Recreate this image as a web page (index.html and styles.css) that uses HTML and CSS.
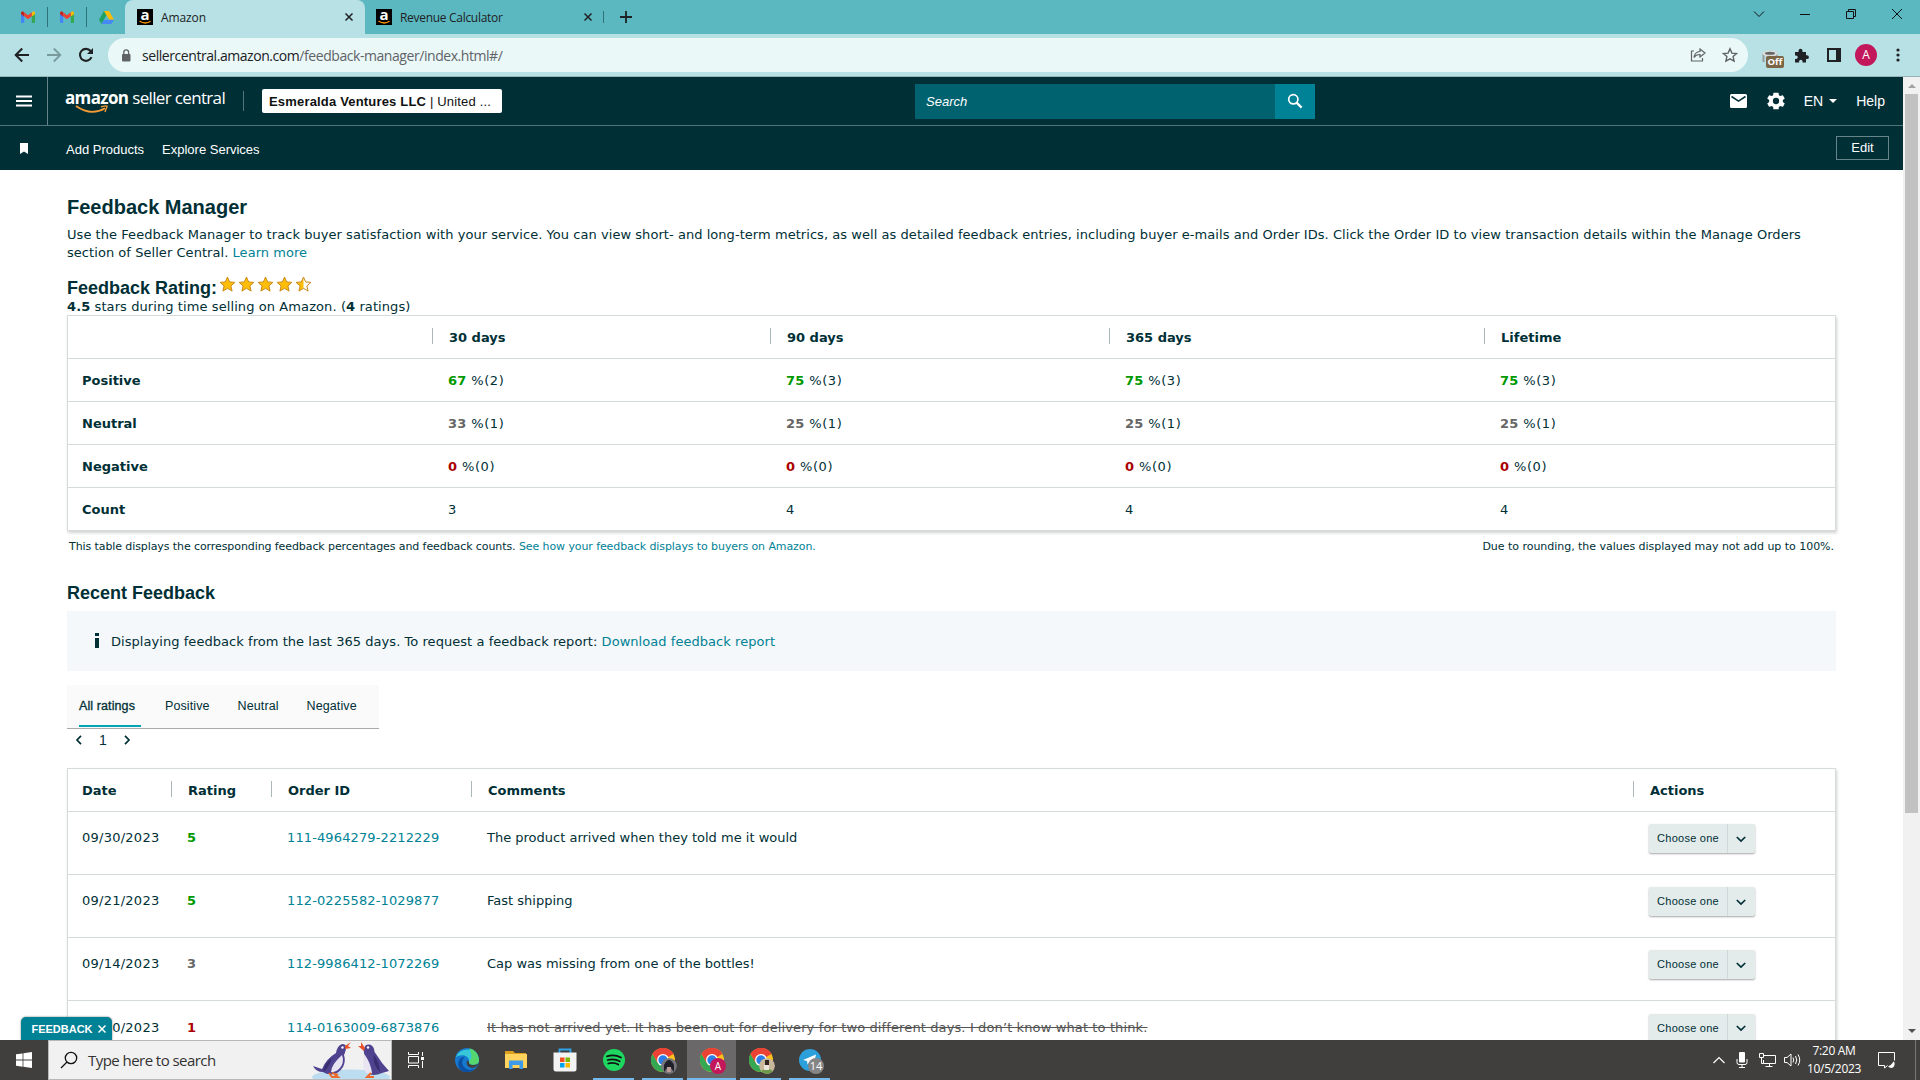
FILE: index.html
```html
<!DOCTYPE html>
<html lang="en">
<head>
  <meta charset="UTF-8">
  <meta name="viewport" content="width=device-width, initial-scale=1.0">
  <title>Feedback Manager - Amazon</title>
  <link rel="stylesheet" href="styles.css">
</head>
<body>

  <!-- shared icons -->
  <svg class="defs" width="0" height="0">
    <symbol id="gmail" viewBox="0 0 14 12">
      <path d="M0 2v9q0 1 1 1h2.200V4.500z" fill="#4285f4"/>
      <path d="M14 2v9q0 1-1 1h-2.200V4.500z" fill="#34a853"/>
      <path d="M10.800 1.500v4L14 3.200V2Q13.500-.5 11.600.700z" fill="#fbbc04"/>
      <path d="M3.200 1.500v4L0 3.200V2Q.5-.5 2.400.700z" fill="#c5221f"/>
      <path d="M3.200 1.300L7 4.300l3.800-3v4L7 8.300l-3.800-3z" fill="#ea4335"/>
    </symbol>
    <symbol id="amazon" viewBox="0 0 16 16">
      <rect width="16" height="16" fill="#000"/>
      <text x="8" y="11" text-anchor="middle" font-size="15" font-weight="bold" font-family="Open Sans, sans-serif" fill="#fff">a</text>
      <path d="M2.500 12q5.500 3.800 11 .3" fill="none" stroke="#f90" stroke-width="1.300"/>
    </symbol>
    <symbol id="cross" viewBox="0 0 10 10">
      <path d="M1.500 1.500l7 7M8.500 1.500l-7 7" fill="none" stroke="currentColor" stroke-width="1.500"/>
    </symbol>
    <symbol id="down" viewBox="0 0 12 12">
      <path d="M1.800 4L6 8l4.200-4" fill="none" stroke="currentColor" stroke-width="1.700"/>
    </symbol>
    <symbol id="star" viewBox="0 0 17 16">
      <path d="M8.500 1l2.100 4.900 5.300.5-4 3.500 1.200 5.200-4.600-2.800-4.600 2.800 1.200-5.200-4-3.500 5.300-.5z" fill="#ffbe0a" stroke="#c98a1a" stroke-width="1"/>
    </symbol>
    <symbol id="star-half" viewBox="0 0 17 16">
      <path d="M8.500 1l2.100 4.900 5.300.5-4 3.500 1.200 5.200-4.600-2.800-4.600 2.800 1.200-5.200-4-3.500 5.300-.5z" fill="#fff"/>
      <path d="M8.500 1v11.300l-4.600 2.800 1.200-5.200-4-3.500 5.300-.5z" fill="#ffbe0a"/>
      <path d="M8.500 1l2.100 4.900 5.300.5-4 3.500 1.200 5.200-4.600-2.800-4.600 2.800 1.200-5.200-4-3.500 5.300-.5z" fill="none" stroke="#c98a1a" stroke-width="1"/>
    </symbol>
    <symbol id="chrome" viewBox="0 0 24 24">
      <circle cx="12" cy="12" r="12" fill="#fcc31e"/>
      <path d="M12 12L1.600 6A12 12 0 0 1 22.400 6z" fill="#ea4335"/>
      <path d="M1.600 6A12 12 0 0 0 12 24l5.200-9H6.800z" fill="#34a853"/>
      <path d="M12 6h10.400A12 12 0 0 0 1.600 6L6.800 15z" fill="#ea4335"/>
      <circle cx="12" cy="12" r="6" fill="#fff"/>
      <circle cx="12" cy="12" r="4.700" fill="#2b7de9"/>
    </symbol>
  </svg>

  <div class="tab-strip">
    <div class="pinned"><svg width="14" height="12"><use href="#gmail"/></svg></div>
    <div class="pinned"><svg width="14" height="12"><use href="#gmail"/></svg></div>
    <div class="pinned last">
      <svg width="15" height="13" viewBox="0 0 15 13">
        <path d="M5 0h5L5 8.700 2.500 13 0 8.700z" fill="#1ea362"/>
        <path d="M5 0h5l5 8.700h-5z" fill="#fbbc04"/>
        <path d="M5 8.700h10L12.500 13h-10z" fill="#4688f4"/>
        <path d="M7.500 4.400L10 8.700H5z" fill="#5bb8c1"/>
      </svg>
    </div>
    <div class="tab active">
      <svg width="16" height="16"><use href="#amazon"/></svg>
      <span>Amazon</span>
      <svg class="close" width="10" height="10"><use href="#cross"/></svg>
    </div>
    <div class="tab">
      <svg width="16" height="16"><use href="#amazon"/></svg>
      <span>Revenue Calculator</span>
      <svg class="close" width="10" height="10"><use href="#cross"/></svg>
    </div>
    <svg class="new-tab" width="12" height="12" viewBox="0 0 12 12"><path d="M6 0v12M0 6h12" stroke="#202124" stroke-width="1.800"/></svg>
    <div class="window-buttons">
      <svg width="12" height="12" viewBox="0 0 12 12"><path d="M1 3.500l5 5 5-5" fill="none" stroke="#111"/></svg>
      <svg width="12" height="12" viewBox="0 0 12 12"><path d="M1 6.500h10" stroke="#111"/></svg>
      <svg width="12" height="12" viewBox="0 0 12 12"><path d="M1.500 3.500h7v7h-7zM3.500 3.500v-2h7v7h-2" fill="none" stroke="#111"/></svg>
      <svg width="12" height="12" viewBox="0 0 12 12"><path d="M1 1l10 10M11 1L1 11" stroke="#111"/></svg>
    </div>
  </div>

  <div class="toolbar">
    <svg width="16" height="16" viewBox="0 0 16 16"><path d="M15 8H2M8.200 1.500L1.700 8l6.500 6.500" fill="none" stroke="#202124" stroke-width="2"/></svg>
    <svg width="16" height="16" viewBox="0 0 16 16"><path d="M1 8h13M7.800 1.500L14.300 8l-6.500 6.500" fill="none" stroke="#789a9d" stroke-width="1.800"/></svg>
    <svg width="16" height="16" viewBox="0 0 16 16"><path d="M13.500 10.200A6 6 0 1 1 12.600 4" fill="none" stroke="#202124" stroke-width="2.100"/><path d="M15 1v6H9z" fill="#202124"/></svg>
    <div class="omnibox">
      <svg width="10" height="13" viewBox="0 0 10 13"><rect x="1" y="5" width="8.500" height="7.500" rx="1" fill="#5f6368"/><path d="M2.800 5.500V3.300a2.400 2.400 0 0 1 4.800 0v2.200" fill="none" stroke="#5f6368" stroke-width="1.300"/></svg>
      <span class="url">sellercentral.amazon.com<span class="path">/feedback-manager/index.html#/</span></span>
      <svg width="16" height="14" viewBox="0 0 16 14"><path d="M4 3H1.500v10h11v-3M10 1l5 4-5 4V6.500Q6 6.300 4 9.500 4.500 4 10 3.500z" fill="none" stroke="#5f6368" stroke-width="1.200"/></svg>
      <svg width="16" height="16" viewBox="0 0 16 16"><path d="M8 1.800l1.900 4.300 4.700.4-3.500 3.100 1 4.600L8 11.800l-4.100 2.400 1-4.600L1.400 6.500l4.700-.4z" fill="none" stroke="#5f6368" stroke-width="1.400"/></svg>
    </div>
    <div class="extension">
      <svg width="16" height="14" viewBox="0 0 16 14"><path d="M1.500 3v9M14.500 3v5" stroke="#999" stroke-width="2"/><ellipse cx="8" cy="3.500" rx="7.500" ry="3" fill="#ddd"/><ellipse cx="8" cy="3.300" rx="5" ry="1.500" fill="#666"/></svg>
      <span>Off</span>
    </div>
    <svg class="puzzle" width="15" height="15" viewBox="0 0 15 15"><path d="M1 4h3.500V2.800a2 2 0 0 1 4 0V4H12v3.300h1a1.900 1.900 0 0 1 0 3.800h-1V14.500H8.500v-1a1.700 1.700 0 0 0-3.400 0v1H1V11h1a1.700 1.700 0 0 0 0-3.500H1z" fill="#202124"/></svg>
    <svg class="panel" width="14" height="14" viewBox="0 0 14 14"><rect x="1" y="1" width="12" height="12" fill="none" stroke="#202124" stroke-width="2"/><path d="M9 1h4v12H9z" fill="#202124"/></svg>
    <div class="profile">A</div>
    <svg class="dots" width="4" height="14" viewBox="0 0 4 14"><circle cx="2" cy="2" r="1.600"/><circle cx="2" cy="7" r="1.600"/><circle cx="2" cy="12" r="1.600"/></svg>
  </div>

  <div class="viewport">
    <div class="page">
      <header>
        <div class="menu">
          <svg width="16" height="12" viewBox="0 0 16 12"><path d="M0 1.500h16M0 6h16M0 10.500h16" stroke="#fff" stroke-width="1.800"/></svg>
        </div>
        <div class="brand">
          <b>amazon</b><span>seller central</span>
          <svg width="34" height="9" viewBox="0 0 34 9"><path d="M1 1q15 10.500 29 2.200" fill="none" stroke="#f79c34" stroke-width="1.900"/><path d="M26 1.800q7-2 6 0T30 7" fill="none" stroke="#f79c34" stroke-width="1.300"/></svg>
        </div>
        <div class="store"><b>Esmeralda Ventures LLC</b> | United ...</div>
        <div class="search">
          <span>Search</span>
          <button>
            <svg width="16" height="16" viewBox="0 0 16 16"><circle cx="6.300" cy="6.300" r="4.600" fill="none" stroke="#fff" stroke-width="1.700"/><path d="M9.600 9.600l5 5" stroke="#fff" stroke-width="2.200"/></svg>
          </button>
        </div>
        <div class="header-links">
          <svg width="17" height="14" viewBox="0 0 17 14"><rect width="17" height="14" rx="1.500" fill="#fff"/><path d="M1.500 2.500l7 4.600 7-4.600" fill="none" stroke="#002f36" stroke-width="1.500"/></svg>
          <svg class="gear" width="18" height="18" viewBox="0 0 24 24"><path fill="#fff" d="M21.100 13.200a9 9 0 0 0 0-2.400l2.300-1.800a.6.6 0 0 0 .1-.7l-2.200-3.800a.6.6 0 0 0-.7-.2l-2.700 1.100a8.500 8.500 0 0 0-2-1.200L15.500 1.400a.6.600 0 0 0-.6-.4h-5.800a.6.6 0 0 0-.6.400l-.4 2.800a8.500 8.500 0 0 0-2 1.200L3.400 4.300a.6.6 0 0 0-.7.200L.5 8.300a.6.600 0 0 0 .1.700l2.300 1.800a9 9 0 0 0 0 2.400L.6 15a.6.6 0 0 0-.1.700l2.200 3.800q.2.400.7.200l2.700-1.100q.9.700 2 1.200l.4 2.800q.1.400.6.400h5.800q.5 0 .6-.4l.4-2.800a8.500 8.500 0 0 0 2-1.200l2.700 1.100q.5.200.7-.2l2.200-3.800a.6.600 0 0 0-.1-.7zM12 16.200a4.200 4.200 0 1 1 0-8.400 4.200 4.200 0 0 1 0 8.400z"/></svg>
          <span class="lang">EN</span>
          <span class="caret"></span>
          <span class="help">Help</span>
        </div>
      </header>

      <nav>
        <svg width="8" height="11" viewBox="0 0 8 11"><path d="M0 0h8v11L4 8.500 0 11z" fill="#fff"/></svg>
        <a>Add Products</a>
        <a>Explore Services</a>
        <button>Edit</button>
      </nav>

      <main>
        <h1>Feedback Manager</h1>
        <p class="intro">Use the Feedback Manager to track buyer satisfaction with your service. You can view short- and long-term metrics, as well as detailed feedback entries, including buyer e-mails and Order IDs. Click the Order ID to view transaction details within the Manage Orders<br>section of Seller Central. <a>Learn more</a></p>

        <div class="rating">
          <h2>Feedback Rating:</h2>
          <svg width="17" height="16"><use href="#star"/></svg>
          <svg width="17" height="16"><use href="#star"/></svg>
          <svg width="17" height="16"><use href="#star"/></svg>
          <svg width="17" height="16"><use href="#star"/></svg>
          <svg width="17" height="16"><use href="#star-half"/></svg>
        </div>
        <p class="summary"><b>4.5</b> stars during time selling on Amazon. (<b>4</b> ratings)</p>

        <table class="metrics">
          <colgroup><col class="m-label"><col class="m-30"><col class="m-90"><col class="m-365"><col></colgroup>
          <tr><th></th><th>30 days</th><th>90 days</th><th>365 days</th><th>Lifetime</th></tr>
          <tr><th>Positive</th><td><b class="good">67</b> %(2)</td><td><b class="good">75</b> %(3)</td><td><b class="good">75</b> %(3)</td><td><b class="good">75</b> %(3)</td></tr>
          <tr><th>Neutral</th><td><b class="mid">33</b> %(1)</td><td><b class="mid">25</b> %(1)</td><td><b class="mid">25</b> %(1)</td><td><b class="mid">25</b> %(1)</td></tr>
          <tr><th>Negative</th><td><b class="bad">0</b> %(0)</td><td><b class="bad">0</b> %(0)</td><td><b class="bad">0</b> %(0)</td><td><b class="bad">0</b> %(0)</td></tr>
          <tr><th>Count</th><td>3</td><td>4</td><td>4</td><td>4</td></tr>
        </table>
        <div class="notes">
          <span>This table displays the corresponding feedback percentages and feedback counts. <a>See how your feedback displays to buyers on Amazon.</a></span>
          <span>Due to rounding, the values displayed may not add up to 100%.</span>
        </div>

        <h2 class="recent">Recent Feedback</h2>
        <div class="info"><i></i><span>Displaying feedback from the last 365 days. To request a feedback report: <a>Download feedback report</a></span></div>

        <div class="filters">
          <span class="current">All ratings</span>
          <span>Positive</span>
          <span>Neutral</span>
          <span>Negative</span>
        </div>
        <div class="pager">
          <svg class="prev" width="12" height="12"><use href="#down"/></svg>
          <span>1</span>
          <svg class="next" width="12" height="12"><use href="#down"/></svg>
        </div>

        <table class="entries">
          <colgroup><col class="e-date"><col class="e-rating"><col class="e-order"><col class="e-comment"><col></colgroup>
          <tr><th>Date</th><th>Rating</th><th>Order ID</th><th>Comments</th><th>Actions</th></tr>
          <tr>
            <td>09/30/2023</td><td><b class="good">5</b></td><td><a>111-4964279-2212229</a></td><td>The product arrived when they told me it would</td>
            <td><button class="choose"><span>Choose one</span><svg width="12" height="12"><use href="#down"/></svg></button></td>
          </tr>
          <tr>
            <td>09/21/2023</td><td><b class="good">5</b></td><td><a>112-0225582-1029877</a></td><td>Fast shipping</td>
            <td><button class="choose"><span>Choose one</span><svg width="12" height="12"><use href="#down"/></svg></button></td>
          </tr>
          <tr>
            <td>09/14/2023</td><td><b class="mid">3</b></td><td><a>112-9986412-1072269</a></td><td>Cap was missing from one of the bottles!</td>
            <td><button class="choose"><span>Choose one</span><svg width="12" height="12"><use href="#down"/></svg></button></td>
          </tr>
          <tr>
            <td>09/10/2023</td><td><b class="bad">1</b></td><td><a>114-0163009-6873876</a></td><td><s>It has not arrived yet. It has been out for delivery for two different days. I don’t know what to think.</s></td>
            <td><button class="choose"><span>Choose one</span><svg width="12" height="12"><use href="#down"/></svg></button></td>
          </tr>
        </table>
      </main>
      <div class="feedback-tab">FEEDBACK <svg width="10" height="10"><use href="#cross"/></svg></div>
    </div>
    <div class="scrollbar"><span class="up"></span><span class="thumb"></span><span class="arrow-down"></span></div>
  </div>

  <div class="taskbar">
    <div class="start">
      <svg width="16" height="16" viewBox="0 0 16 16"><path d="M0 2.300l6.600-.9v6.200H0zM7.400 1.300L16 0v7.600H7.400zM0 8.400h6.600v6.300L0 13.800zM7.400 8.400H16V16l-8.600-1.200z" fill="#fff"/></svg>
    </div>
    <div class="task-search">
      <svg width="18" height="18" viewBox="0 0 18 18"><circle cx="11" cy="7" r="5.700" fill="none" stroke="#111" stroke-width="1.300"/><path d="M7 11l-6 6" stroke="#111" stroke-width="1.300"/></svg>
      <span>Type here to search</span>
      <svg class="penguins" width="80" height="38" viewBox="0 0 80 38">
        <ellipse cx="40" cy="36" rx="39" ry="7.500" fill="#bcdcf0"/>
        <!-- left penguin, leaning towards the right one -->
        <path d="M2 25l9 3q4-10 14-16 1-7 6-9 5 0 4 5-1 4-2 6 2 6-1 12-4 6-9 7-7 1-11-2-7 0-10-6z" fill="#4f4390"/>
        <path d="M31 14q3 8-3 14-4 4-8 3 0-7 11-17z" fill="#e8e4f2"/>
        <path d="M21 17q-7 4-9 14 6-4 9-14z" fill="#372d70"/>
        <path d="M34 5l6-4-3 4 3 2-6 1z" fill="#e8532b"/>
        <circle cx="31.500" cy="6.500" r="1.200" fill="#fff"/>
        <path d="M18 32l3 4h6l-5-4M21 32l6 2" fill="none" stroke="#ec6a2c" stroke-width="2"/>
        <!-- right penguin -->
        <path d="M78 30l-7 2q-9 4-15 0-5-7-2-17-3-7 1-11 6-2 8 4 0 3 2 5 6 10 13 17z" fill="#4f4390"/>
        <path d="M54 14q-4 10 1 18 3 2 6 0-1-9-7-18z" fill="#e8e4f2"/>
        <path d="M63 14q-2 9 6 17-1-10-6-17z" fill="#372d70"/>
        <path d="M54 7l-4-6v4l-3 0 6 5z" fill="#e8532b"/>
        <circle cx="57" cy="6.500" r="1.200" fill="#fff"/>
        <path d="M60 32l-4 4h7" fill="none" stroke="#ec6a2c" stroke-width="2"/>
      </svg>
    </div>
    <div class="task-view">
      <svg width="17" height="16" viewBox="0 0 17 16"><path d="M.5 0v2.500h10V0M.5 16v-2.500h10V16M.5 4.500h10v6.500H.5zM14.500 0v4M14.500 9v7" fill="none" stroke="#fff"/><path d="M13 5h3v3h-3z" fill="#fff"/></svg>
    </div>
    <div class="apps">
      <div class="app">
        <svg width="24" height="24" viewBox="0 0 24 24"><circle cx="12" cy="12" r="12" fill="#1479cf"/><path d="M.8 9.500A12 12 0 0 1 24 11.500q.3 5-5.500 5.300-5 0-4.300-3.300Q14 9 9.500 7.500 4 6.500.8 9.500z" fill="#38c6d9"/><path d="M14 .200A12 12 0 0 1 24 11.500q.3 5-5.500 5.300-5 0-4.300-3.300Q19 8 14 .200z" fill="#55d66e"/><path d="M9.500 9Q5 14 9 19t11 1.500A12 12 0 0 1 8 23.500Q2 20 3.500 13.500 5 9 9.500 9z" fill="#0c4fa0"/><path d="M14 13.500q-1 3.500 4.500 3.400 3 0 4.600-1.400-1.700 4.500-6 4.400-6-.8-5.500-6 1.200-2.300 2.400-.4z" fill="#413f3e"/></svg>
      </div>
      <div class="app">
        <svg width="22" height="20" viewBox="0 0 22 20"><path d="M0 1h8l2 2h11v5H0z" fill="#dba11e"/><path d="M0 4h22v14H0z" fill="#ffd45e"/><path d="M4 10.500h14V19h-3.500v-4h-7v4H4z" fill="#3d9be9"/></svg>
      </div>
      <div class="app">
        <svg width="24" height="24" viewBox="0 0 24 24"><path d="M6.500 5V1.500h11V5" fill="none" stroke="#2ea5ea" stroke-width="1.800"/><path d="M.5 4.500h23V21q0 2.500-2.500 2.500H3Q.5 23.500.5 21z" fill="#f3f3f3"/><path d="M7 9.500h4.500V14H7z" fill="#f25022"/><path d="M12.500 9.500H17V14h-4.500z" fill="#7fba00"/><path d="M7 15h4.500v4.500H7z" fill="#00a4ef"/><path d="M12.500 15H17v4.500h-4.500z" fill="#ffb900"/></svg>
      </div>
      <div class="app open">
        <svg width="22" height="22" viewBox="0 0 22 22"><circle cx="11" cy="11" r="11" fill="#1ed760"/><path d="M4 7.300q7.500-2.300 14 1.200M4.700 11q6.500-1.800 12 1.200M5.300 14.500q5.500-1.500 10 1" fill="none" stroke="#111" stroke-width="1.800" stroke-linecap="round"/></svg>
      </div>
      <div class="app open">
        <svg width="24" height="24"><use href="#chrome"/></svg>
        <svg class="badge" width="16" height="16" viewBox="0 0 16 16"><circle cx="8" cy="8" r="8" fill="#77757c"/><path d="M3 14V7q5-10 10 0v7l-3-4H6z" fill="#202028"/><path d="M6 9h4v5H6z" fill="#b99b98"/></svg>
      </div>
      <div class="app open selected">
        <svg width="24" height="24"><use href="#chrome"/></svg>
        <span class="badge letter">A</span>
      </div>
      <div class="app open">
        <svg width="24" height="24"><use href="#chrome"/></svg>
        <svg class="badge" width="16" height="16" viewBox="0 0 16 16"><circle cx="8" cy="8" r="8" fill="#c9b79b"/><path d="M2 13q6-5 12 0-6 6-12 0z" fill="#6f9a4c"/><path d="M6 2h4v5H6z" fill="#33261f"/><path d="M5 7h5v5H5z" fill="#ece5dd"/></svg>
      </div>
      <div class="app open">
        <svg width="22" height="22" viewBox="0 0 22 22"><circle cx="11" cy="11" r="11" fill="#2ca0da"/><path d="M4 11l13-5.500-2.500 11-4-3-2 2-.5-3.500z" fill="#fff"/></svg>
        <span class="badge count">14</span>
      </div>
    </div>
    <div class="tray">
      <svg width="12" height="12" viewBox="0 0 12 12"><path d="M.5 9L6 3.500 11.500 9" fill="none" stroke="#fff" stroke-width="1.200"/></svg>
      <svg width="12" height="16" viewBox="0 0 12 16"><rect x="3" width="6" height="10.500" rx="1" fill="#fff"/><path d="M1 7v3.500q0 2 2 2h6q2 0 2-2V7M6 12.500V16M3 15.500h6" fill="none" stroke="#fff"/></svg>
      <svg width="17" height="14" viewBox="0 0 17 14"><path d="M5 2.500h11.500v8H4.500V7M10.500 10.500v3M6.500 13.500h7M.5.500h4v4h-4zM2.500 4.500v6h2" fill="none" stroke="#fff"/></svg>
      <svg class="volume" width="17" height="14" viewBox="0 0 17 14"><path d="M.5 4.500h2.500l4-3.500v12l-4-3.500H.5zM9 4.500q1.500 2.500 0 5M11.500 3q2.500 4 0 8M14 1.500q3.500 5.500 0 11" fill="none" stroke="#fff"/></svg>
      <div class="clock"><span>7:20 AM</span><span>10/5/2023</span></div>
      <svg class="notify" width="17" height="17" viewBox="0 0 17 17"><path d="M9.500 13.500L6.500 16v-2.500h-6V.500h16v8" fill="none" stroke="#fff"/><path d="M16 9.500q-1 0-1.500 1.500-2 3-4.500 3.500 3 2.500 5.500.5 2-2.500.5-5.500z" fill="#fff"/></svg>
      <span class="peek"></span>
    </div>
  </div>

</body>
</html>
```
FILE: styles.css
```css
:root {
  --dark: #002f36;
  --link: #008296;
  --line: #d5dbdb;
  --arial: Arial, "Liberation Sans", sans-serif;
  --verdana: Verdana, "DejaVu Sans", sans-serif;
  --segoe: "Segoe UI", "Open Sans", sans-serif;
}

* {
  margin: 0;
  padding: 0;
  box-sizing: border-box;
}

body {
  height: 100vh;
  display: flex;
  flex-direction: column;
  overflow: hidden;
  background: #fff;
  color: var(--dark);
  font-family: var(--verdana);
  font-size: 13px;
}

svg {
  display: block;
  flex: none;
}

.defs {
  display: none;
}

a {
  color: var(--link);
}

button {
  border: none;
  background: none;
  font-family: inherit;
}

/* browser tabs */
.tab-strip {
  height: 34px;
  flex: none;
  display: flex;
  align-items: center;
  padding-left: 9px;
  background: #5bb8c1;
  font-family: var(--segoe);
  font-size: 12px;
  color: #202124;
}

.pinned {
  width: 39px;
  height: 20px;
  display: flex;
  align-items: center;
  justify-content: center;
  border-right: 1px solid #2f7379;
}

.pinned.last {
  width: 38px;
  border-right: none;
}

.tab {
  width: 238px;
  height: 34px;
  display: flex;
  align-items: center;
  gap: 8px;
  padding: 0 10px 0 11px;
  letter-spacing: -0.3px;
}

.tab .close {
  margin-left: auto;
}

.tab.active {
  width: 240px;
  padding: 0 11px 0 12px;
  background: #b7e1e4;
  border-radius: 8px 8px 0 0;
  letter-spacing: -0.1px;
}

.new-tab {
  box-sizing: content-box;
  padding-left: 16px;
  margin: 4px 0;
  border-left: 1px solid #2f7379;
}

.window-buttons {
  margin-left: auto;
  margin-bottom: 6px;
  padding-right: 17px;
  display: flex;
  gap: 34px;
}

/* address bar */
.toolbar {
  height: 43px;
  flex: none;
  display: flex;
  align-items: center;
  padding: 0 20px 0 14px;
  background: #b7e1e4;
  border-bottom: 1px solid #93b5b8;
  font-family: var(--segoe);
}

.toolbar > svg + svg {
  margin-left: 16px;
}

.omnibox {
  width: 1640px;
  height: 34px;
  margin-left: 14px;
  padding: 0 10px 0 13px;
  display: flex;
  align-items: center;
  gap: 16px;
  border-radius: 17px;
  background: #ebf8f8;
}

.url {
  flex: 1;
  margin-left: -5px;
  font-size: 14px;
  letter-spacing: -0.44px;
  color: #202124;
}

.url .path {
  color: #5f6368;
}

.extension {
  position: relative;
  margin-left: 14px;
  width: 22px;
  height: 16px;
}

.extension svg {
  margin-top: 3px;
}

.extension span {
  position: absolute;
  left: 4px;
  top: 9px;
  width: 18px;
  height: 12px;
  border-radius: 2px;
  background: #7b6545;
  color: #fff;
  font-size: 9.5px;
  font-weight: bold;
  line-height: 12px;
  text-align: center;
}

.puzzle {
  margin-left: 10px;
}

.toolbar > .panel {
  margin-left: 18px;
}

.profile {
  width: 22px;
  height: 22px;
  margin: 0 19px 0 14px;
  border-radius: 50%;
  background: #c2185b;
  color: #fff;
  font-size: 12px;
  line-height: 22px;
  text-align: center;
}

.dots {
  fill: #202124;
}

/* page */
.viewport {
  height: 963px;
  flex: none;
  display: flex;
}

.page {
  position: relative;
  flex: 1;
  overflow: hidden;
}

header {
  height: 49px;
  display: flex;
  align-items: center;
  background: var(--dark);
  border-bottom: 1px solid #52757a;
  color: #fff;
  font-family: var(--arial);
}

.menu {
  width: 48px;
  height: 48px;
  display: flex;
  align-items: center;
  justify-content: center;
  border-right: 1px solid #66858a;
}

.brand {
  position: relative;
  width: 196px;
  height: 20px;
  padding-left: 17px;
  display: flex;
  gap: 4px;
  align-items: center;
  border-right: 1px solid #52757a;
  font-family: "Open Sans", sans-serif;
  font-size: 17px;
  letter-spacing: -0.66px;
  line-height: 16px;
  white-space: nowrap;
}

.brand b,
.brand span {
  padding-bottom: 6px;
}

.brand svg {
  position: absolute;
  left: 27px;
  top: 14px;
}

.store {
  width: 240px;
  height: 24px;
  margin-left: 18px;
  padding-left: 7px;
  border-radius: 2px;
  background: #fff;
  color: #0f1111;
  font-size: 13px;
  letter-spacing: 0.18px;
  line-height: 25px;
}

.search {
  width: 400px;
  height: 35px;
  margin-left: 413px;
  display: flex;
  align-items: center;
  justify-content: space-between;
  padding-left: 11px;
  background: #00626f;
  font-size: 13px;
  font-style: italic;
}

.search button {
  width: 40px;
  height: 35px;
  display: flex;
  align-items: center;
  justify-content: center;
  background: #008296;
}

.header-links {
  margin-left: auto;
  padding-right: 18px;
  display: flex;
  align-items: center;
  font-size: 14px;
}

.gear {
  margin: 0 19px 0 20px;
}

.caret {
  margin: 0 19px 0 6px;
  border: 4px solid transparent;
  border-top-color: #fff;
  border-bottom: none;
}

nav {
  height: 44px;
  display: flex;
  align-items: center;
  gap: 18px;
  padding: 0 14px 0 20px;
  background: var(--dark);
  font-family: var(--arial);
  font-size: 13px;
}

nav svg {
  margin-right: 20px;
}

nav a {
  padding-top: 2px;
  color: #fff;
}

nav button {
  width: 53px;
  height: 24px;
  margin-left: auto;
  padding-bottom: 2px;
  border: 1px solid #66858a;
  color: #fff;
  font-size: 13px;
}

main {
  padding: 24px 67px 0;
}

h1,
h2 {
  font-family: var(--arial);
}

h1 {
  font-size: 20px;
  line-height: 26px;
}

.intro {
  margin-top: 6px;
  line-height: 18px;
  letter-spacing: 0.05px;
  white-space: nowrap;
}

.rating {
  height: 22px;
  margin-top: 13px;
  display: flex;
  align-items: center;
  gap: 2px;
}

.rating h2 {
  padding-top: 4px;
  font-size: 18px;
}

.rating svg {
  margin-bottom: 4px;
}

.summary {
  margin: 1px 0 -1px;
  line-height: 18px;
  letter-spacing: 0.09px;
}

table {
  width: 1769px;
  table-layout: fixed;
  border-collapse: separate;
  border-spacing: 0;
  border: 1px solid var(--line);
  box-shadow: 1px 2px 3px rgba(0, 0, 0, 0.18);
}

th,
td {
  height: 43px;
  padding-left: 14px;
  text-align: left;
  border-bottom: 1px solid var(--line);
}

td + td,
th + td {
  padding-left: 16px;
}

tr:last-child > * {
  border-bottom: none;
}

/* short divider before every heading but the first */
tr:first-child th + th {
  padding-left: 17px;
  background: linear-gradient(#aab7b8, #aab7b8) 0 12px / 1px 16px no-repeat;
}

.metrics td {
  letter-spacing: 0.6px;
}

.metrics td b {
  letter-spacing: 0.2px;
}

.metrics tr:last-child > * {
  height: 42px;
}

.m-label { width: 364px; }
.m-30 { width: 338px; }
.m-90 { width: 339px; }
.m-365 { width: 375px; }

.e-date { width: 103px; }
.e-rating { width: 100px; }
.e-order { width: 200px; }
.e-comment { width: 1162px; }

.good { color: #090; }
.mid { color: #666; }
.bad { color: #a00; }

.notes {
  display: flex;
  justify-content: space-between;
  padding: 8px 2px 0;
  font-size: 11px;
  letter-spacing: -0.03px;
  line-height: 16px;
}

.notes span:first-child {
  letter-spacing: -0.09px;
}

.recent {
  margin-top: 27px;
  font-size: 18px;
  line-height: 22px;
}

.info {
  height: 60px;
  margin-top: 7px;
  padding-left: 28px;
  display: flex;
  align-items: center;
  gap: 12px;
  background: #f4f8fa;
  letter-spacing: 0.05px;
}

.info i {
  width: 4px;
  height: 15px;
  margin-bottom: 2px;
  background: linear-gradient(var(--dark) 3px, transparent 3px, transparent 5px, var(--dark) 5px);
}

.filters {
  width: 312px;
  height: 44px;
  margin-top: 14px;
  padding-left: 12px;
  display: flex;
  background: #fafafa;
  border-bottom: 1px solid #aaa;
  font-family: var(--arial);
  font-size: 12.5px;
  letter-spacing: 0.1px;
  line-height: 42px;
  white-space: nowrap;
}

.filters span {
  flex: none;
  height: 42px;
  margin-right: 28px;
}

.filters .current {
  width: 62px;
  margin-right: 24px;
  border-bottom: 2px solid #00a4b4;
  -webkit-text-stroke: 0.3px;
}

.filters span:last-child {
  margin-right: 0;
}

.pager {
  height: 22px;
  display: flex;
  align-items: center;
  padding-left: 6px;
  gap: 14px;
  font-family: var(--arial);
  font-size: 14px;
}

.prev {
  transform: rotate(90deg);
}

.next {
  transform: rotate(-90deg);
}

.entries {
  margin-top: 17px;
}

.entries td {
  height: 63px;
  padding-bottom: 11px;
}

.entries td:first-child {
  letter-spacing: 0.25px;
}

.entries a,
.entries s {
  letter-spacing: 0.12px;
}

.choose {
  width: 106px;
  height: 29px;
  display: flex;
  align-items: center;
  margin-top: 2px;
  border-radius: 2px;
  background: #e3ebeb;
  box-shadow: 0 1px 2px rgba(0, 0, 0, 0.35);
  color: var(--dark);
  font-family: var(--arial);
  font-size: 11px;
  letter-spacing: 0.25px;
}

.choose span {
  width: 79px;
  line-height: 29px;
  border-right: 1px solid #cfd9d9;
}

.choose svg {
  margin-left: 7px;
}

s {
  color: #555;
}

.feedback-tab {
  position: absolute;
  left: 21px;
  bottom: 0;
  width: 91px;
  height: 23px;
  padding-left: 5px;
  display: flex;
  align-items: center;
  justify-content: center;
  gap: 4px;
  border-radius: 5px 5px 0 0;
  background: #008296;
  box-shadow: 0 0 2px #666;
  color: #fff;
  font: bold 11px var(--arial);
}

.scrollbar {
  width: 17px;
  display: flex;
  flex-direction: column;
  align-items: center;
  background: #f1f1f1;
}

.up,
.arrow-down {
  border: 4px solid transparent;
}

.up {
  margin: 3px 0 6px;
  border-bottom-color: #a3a3a3;
}

.thumb {
  width: 13px;
  height: 719px;
  background: #c1c1c1;
}

.arrow-down {
  margin-top: auto;
  margin-bottom: 3px;
  border-top-color: #505050;
}

/* windows taskbar */
.taskbar {
  height: 40px;
  flex: none;
  display: flex;
  background: #413f3e;
  font-family: var(--segoe);
  color: #fff;
}

.start,
.task-view {
  width: 48px;
  display: flex;
  align-items: center;
  justify-content: center;
}

.task-search {
  width: 344px;
  display: flex;
  align-items: center;
  gap: 10px;
  padding-left: 11px;
  border: 1px solid #b9b9b9;
  background: #f1f1f1;
  color: #333;
  font-size: 15px;
  letter-spacing: -0.55px;
}

.penguins {
  margin-left: auto;
}

.apps {
  display: flex;
  margin-left: 2px;
}

.app {
  position: relative;
  width: 49px;
  display: flex;
  align-items: center;
  justify-content: center;
}

.app.open::after {
  content: "";
  position: absolute;
  left: 4px;
  right: 4px;
  bottom: 0;
  height: 2px;
  background: #76b9ed;
}

.app.selected {
  background: #6a6868;
}

.app.selected::after {
  left: 0;
  right: 0;
}

.badge {
  position: absolute;
  left: 23px;
  top: 18px;
  width: 16px;
  height: 16px;
  border-radius: 50%;
  font-size: 10px;
  line-height: 16px;
  text-align: center;
}

.letter {
  background: #c2185b;
}

.count {
  background: #858585;
  font-size: 11px;
}

.tray {
  margin-left: auto;
  padding-right: 4px;
  display: flex;
  align-items: center;
  gap: 11px;
}

.volume {
  margin-left: -3px;
}

.clock {
  width: 54px;
  margin-left: -5px;
  display: flex;
  flex-direction: column;
  align-items: center;
  font-size: 12px;
  line-height: 18px;
  letter-spacing: -0.3px;
}

.notify {
  margin-left: 6px;
}

.peek {
  width: 1px;
  height: 40px;
  margin-left: 9px;
  background: #7a7877;
}
```
